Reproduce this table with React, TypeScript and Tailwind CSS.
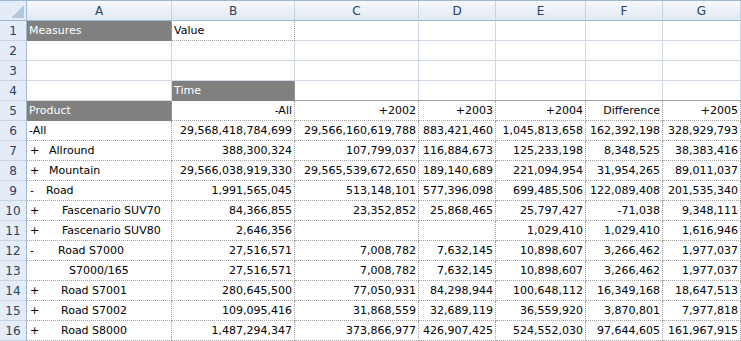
import React from "react";

type Cell = { t?: string; kind?: "gray" | "dot" | "plain" | "topdot"; right?: boolean };

const cols = ["A", "B", "C", "D", "E", "F", "G"];
const colW = ["w-[145px]", "w-[123px]", "w-[124px]", "w-[77px]", "w-[90px]", "w-[77px]", "w-[78px]"];

const labels: { sign: string; text: string; pad: string }[] = [
  { sign: "", text: "-All", pad: "pl-[2px]" },
  { sign: "+", text: "Allround", pad: "pl-[22px]" },
  { sign: "+", text: "Mountain", pad: "pl-[22px]" },
  { sign: "-", text: "Road", pad: "pl-[19px]" },
  { sign: "+", text: "Fascenario SUV70", pad: "pl-[35px]" },
  { sign: "+", text: "Fascenario SUV80", pad: "pl-[35px]" },
  { sign: "-", text: "Road S7000", pad: "pl-[31px]" },
  { sign: "", text: "S7000/165", pad: "pl-[42px]" },
  { sign: "+", text: "Road S7001", pad: "pl-[34px]" },
  { sign: "+", text: "Road S7002", pad: "pl-[34px]" },
  { sign: "+", text: "Road S8000", pad: "pl-[34px]" },
];

const values: string[][] = [
  ["29,568,418,784,699", "29,566,160,619,788", "883,421,460", "1,045,813,658", "162,392,198", "328,929,793"],
  ["388,300,324", "107,799,037", "116,884,673", "125,233,198", "8,348,525", "38,383,416"],
  ["29,566,038,919,330", "29,565,539,672,650", "189,140,689", "221,094,954", "31,954,265", "89,011,037"],
  ["1,991,565,045", "513,148,101", "577,396,098", "699,485,506", "122,089,408", "201,535,340"],
  ["84,366,855", "23,352,852", "25,868,465", "25,797,427", "-71,038", "9,348,111"],
  ["2,646,356", "", "", "1,029,410", "1,029,410", "1,616,946"],
  ["27,516,571", "7,008,782", "7,632,145", "10,898,607", "3,266,462", "1,977,037"],
  ["27,516,571", "7,008,782", "7,632,145", "10,898,607", "3,266,462", "1,977,037"],
  ["280,645,500", "77,050,931", "84,298,944", "100,648,112", "16,349,168", "18,647,513"],
  ["109,095,416", "31,868,559", "32,689,119", "36,559,920", "3,870,801", "7,977,818"],
  ["1,487,294,347", "373,866,977", "426,907,425", "524,552,030", "97,644,605", "161,967,915"],
];

const topRows: Cell[][] = [
  [{ t: "Measures", kind: "gray" }, { t: "Value", kind: "dot" }, {}, {}, {}, {}, {}],
  [{}, {}, {}, {}, {}, {}, {}],
  [{}, {}, {}, {}, {}, {}, {}],
  [{}, { t: "Time", kind: "gray" }, { kind: "topdot" }, { kind: "topdot" }, { kind: "topdot" }, { kind: "topdot" }, { kind: "topdot" }],
  [
    { t: "Product", kind: "gray" },
    { t: "-All", kind: "dot", right: true },
    { t: "+2002", kind: "dot", right: true },
    { t: "+2003", kind: "dot", right: true },
    { t: "+2004", kind: "dot", right: true },
    { t: "Difference", kind: "dot", right: true },
    { t: "+2005", kind: "dot", right: true },
  ],
];

function cellClass(kind?: string) {
  if (kind === "gray") return "bg-[#808080] text-white border-r border-b border-r-[#a0a0a0] border-b-[#808080] border-dotted";
  if (kind === "dot") return "bg-white border-r border-b border-dotted border-[#a0a0a0]";
  if (kind === "topdot") return "bg-white border-r border-b border-r-[#d0d7e5] border-b-[#a0a0a0] border-b-dotted";
  return "bg-white border-r border-b border-[#d0d7e5]";
}

function RowHead({ n }: { n: number }) {
  return (
    <div className="w-[27px] h-[20px] shrink-0 flex items-center justify-center bg-[#e4ecf7] border-r border-b border-r-[#9eb6ce] border-b-[#c5d3e3] text-[#27415f] text-[12px]">
      {n}
    </div>
  );
}

export default function App() {
  return (
    <div className="w-[741px] h-[341px] overflow-hidden bg-white text-[11px] text-black" style={{ fontFamily: "'DejaVu Sans', Tahoma, sans-serif" }}>
      {/* column headers */}
      <div className="flex h-[21px] border-t border-[#9eb6ce]">
        <div className="relative w-[27px] h-[20px] shrink-0 bg-[#e4ecf7] border-r border-b border-[#9eb6ce]">
          <svg className="absolute right-[2px] bottom-[2px]" width="13" height="13">
            <polygon points="13,0 13,13 0,13" fill="#b4c7de" />
          </svg>
        </div>
        {cols.map((c, i) => (
          <div
            key={c}
            className={`${colW[i]} h-[20px] shrink-0 flex items-center justify-center bg-gradient-to-b from-[#f7f9fc] to-[#e1e8f2] border-r border-b border-r-[#c5d3e3] border-b-[#9eb6ce] text-[#27415f] text-[12px]`}
          >
            {c}
          </div>
        ))}
      </div>

      {topRows.map((row, r) => (
        <div key={r} className="flex">
          <RowHead n={r + 1} />
          {row.map((cell, i) => (
            <div
              key={i}
              className={`${colW[i]} h-[20px] shrink-0 flex items-center px-[2px] pt-[1px] whitespace-nowrap overflow-hidden ${cell.right ? "justify-end" : ""} ${cellClass(cell.kind)}`}
            >
              {cell.t}
            </div>
          ))}
        </div>
      ))}

      {labels.map((lab, r) => (
        <div key={r} className="flex">
          <RowHead n={r + 6} />
          <div className={`${colW[0]} relative h-[20px] shrink-0 flex items-center pt-[1px] whitespace-nowrap ${cellClass("dot")}`}>
            {lab.sign && <span className="absolute left-[3px]">{lab.sign}</span>}
            <span className={lab.pad}>{lab.text}</span>
          </div>
          {values[r].map((v, i) => (
            <div
              key={i}
              className={`${colW[i + 1]} h-[20px] shrink-0 flex items-center justify-end px-[2px] pt-[1px] whitespace-nowrap ${cellClass("dot")}`}
            >
              {v}
            </div>
          ))}
        </div>
      ))}
    </div>
  );
}
